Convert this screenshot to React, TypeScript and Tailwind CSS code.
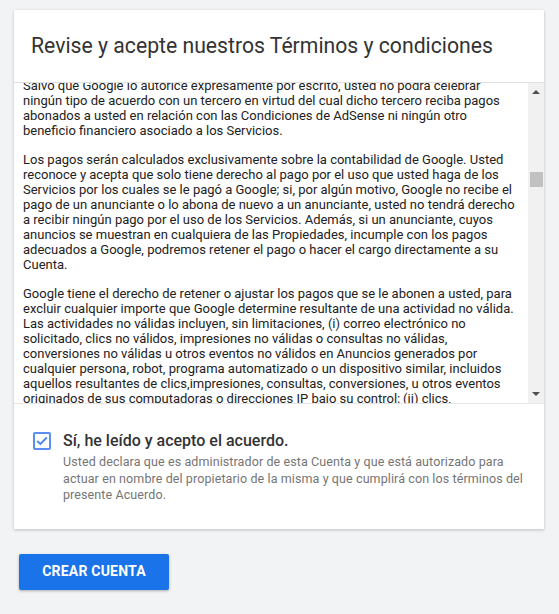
import React from 'react';

const paragraphs: string[][] = [
  [
    'Salvo que Google lo autorice expresamente por escrito, usted no podrá celebrar',
    'ningún tipo de acuerdo con un tercero en virtud del cual dicho tercero reciba pagos',
    'abonados a usted en relación con las Condiciones de AdSense ni ningún otro',
    'beneficio financiero asociado a los Servicios.',
  ],
  [
    'Los pagos serán calculados exclusivamente sobre la contabilidad de Google. Usted',
    'reconoce y acepta que solo tiene derecho al pago por el uso que usted haga de los',
    'Servicios por los cuales se le pagó a Google; si, por algún motivo, Google no recibe el',
    'pago de un anunciante o lo abona de nuevo a un anunciante, usted no tendrá derecho',
    'a recibir ningún pago por el uso de los Servicios. Además, si un anunciante, cuyos',
    'anuncios se muestran en cualquiera de las Propiedades, incumple con los pagos',
    'adecuados a Google, podremos retener el pago o hacer el cargo directamente a su',
    'Cuenta.',
  ],
  [
    'Google tiene el derecho de retener o ajustar los pagos que se le abonen a usted, para',
    'excluir cualquier importe que Google determine resultante de una actividad no válida.',
    'Las actividades no válidas incluyen, sin limitaciones, (i) correo electrónico no',
    'solicitado, clics no válidos, impresiones no válidas o consultas no válidas,',
    'conversiones no válidas u otros eventos no válidos en Anuncios generados por',
    'cualquier persona, robot, programa automatizado o un dispositivo similar, incluidos',
    'aquellos resultantes de clics,impresiones, consultas, conversiones, u otros eventos',
    'originados de sus computadoras o direcciones IP bajo su control; (ii) clics,',
    'impresiones, consultas, conversiones u otros eventos solicitados mediante pago.',
  ],
];

const Scrollbar: React.FC = () => (
  <div className="w-[16px] shrink-0 bg-[#f1f1f1] flex flex-col items-center">
    <div className="h-[17px] w-full flex items-center justify-center">
      <svg width="8" height="5" viewBox="0 0 8 5">
        <path d="M0 5 L4 1 L8 5 Z" fill="#505050" />
      </svg>
    </div>
    <div className="mt-[72px] h-[15px] w-[13px] bg-[#c1c1c1]" />
    <div className="flex-1" />
    <div className="h-[17px] w-full flex items-center justify-center">
      <svg width="8" height="5" viewBox="0 0 8 5">
        <path d="M0 0 L4 4 L8 0 Z" fill="#505050" />
      </svg>
    </div>
  </div>
);

export default function App() {
  return (
    <div
      className="min-h-[614px] w-full bg-[#f1f3f4] pl-[14px] pt-[10px]"
      style={{ fontFamily: 'Roboto, "Liberation Sans", sans-serif' }}
    >
      <div className="w-[530px] bg-white shadow-[0_1px_3px_rgba(0,0,0,0.22)]">
        {/* Header */}
        <div className="h-[73px] flex items-center px-[17px] border-b border-[#e0e0e0]">
          <h1 className="text-[21.2px] leading-none text-[#333]">
            Revise y acepte nuestros Términos y condiciones
          </h1>
        </div>

        {/* Terms box */}
        <div className="flex h-[321px] border-b border-[#e6e6e6]">
          <div className="flex-1 overflow-hidden pl-[9px]">
            <div className="-mt-[5px] flex flex-col gap-[14px] text-[13px] leading-[15px] text-[#222]">
              {paragraphs.map((lines, i) => (
                <p key={i} className="whitespace-nowrap">
                  {lines.map((line, j) => (
                    <span key={j} className="block">
                      {line}
                    </span>
                  ))}
                </p>
              ))}
            </div>
          </div>
          <Scrollbar />
        </div>

        {/* Agreement */}
        <div className="flex pl-[19px] pt-[27px] pb-[25px] pr-4">
          <div className="mt-[1px] h-[18px] w-[18px] shrink-0 rounded-[2px] border-2 border-[#5a8ef0] bg-white flex items-center justify-center">
            <svg width="12" height="10" viewBox="0 0 12 10">
              <path d="M1.2 5 L4.4 8 L10.8 1.5" fill="none" stroke="#4a84ee" strokeWidth="1.8" />
            </svg>
          </div>
          <div className="ml-[12px]">
            <div className="text-[16px] leading-[20px] text-[#333] font-medium">
              Sí, he leído y acepto el acuerdo.
            </div>
            <p className="mt-[3px] whitespace-nowrap text-[12.5px] leading-[16.5px] tracking-[0.1px] text-[#757575]">
              Usted declara que es administrador de esta Cuenta y que está autorizado para
              <br />
              actuar en nombre del propietario de la misma y que cumplirá con los términos del
              <br />
              presente Acuerdo.
            </p>
          </div>
        </div>
      </div>

      <button className="mt-[25px] ml-[5px] h-[36px] w-[150px] rounded-[2px] bg-[#1a73e8] text-white text-[14px] font-bold tracking-[0.2px] shadow-[0_1px_3px_rgba(0,0,0,0.3)]">
        CREAR CUENTA
      </button>
    </div>
  );
}
